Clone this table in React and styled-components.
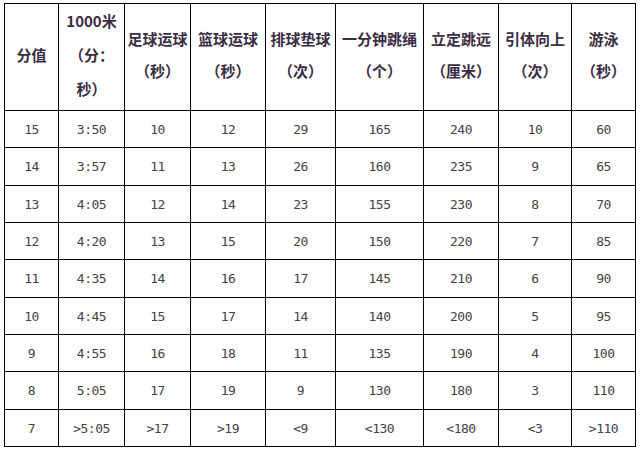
import React from "react";
import styled, { createGlobalStyle } from "styled-components";

const GlobalStyle = createGlobalStyle`
  html, body {
    margin: 0;
    padding: 0;
    background: #ffffff;
  }
  body {
    padding: 3px 0 0 4px;
  }
`;

const COLS = [54, 66, 66, 75, 70, 88, 75, 73, 64];

const HEAD = [
  ["分值"],
  ["1000米", "（分：", "秒）"],
  ["足球运球", "（秒）"],
  ["篮球运球", "（秒）"],
  ["排球垫球", "（次）"],
  ["一分钟跳绳", "（个）"],
  ["立定跳远", "（厘米）"],
  ["引体向上", "（次）"],
  ["游泳", "（秒）"],
];

const ROWS = [
  ["15", "3:50", "10", "12", "29", "165", "240", "10", "60"],
  ["14", "3:57", "11", "13", "26", "160", "235", "9", "65"],
  ["13", "4:05", "12", "14", "23", "155", "230", "8", "70"],
  ["12", "4:20", "13", "15", "20", "150", "220", "7", "85"],
  ["11", "4:35", "14", "16", "17", "145", "210", "6", "90"],
  ["10", "4:45", "15", "17", "14", "140", "200", "5", "95"],
  ["9", "4:55", "16", "18", "11", "135", "190", "4", "100"],
  ["8", "5:05", "17", "19", "9", "130", "180", "3", "110"],
  ["7", ">5:05", ">17", ">19", "<9", "<130", "<180", "<3", ">110"],
];

const Table = styled.table`
  border-collapse: collapse;
  table-layout: fixed;
  width: 632px;
  border: 1px solid #000;
`;

const HeadRow = styled.tr`
  height: 106px;
`;

const HeadCell = styled.th`
  border: 1px solid #000;
  padding: 0 2px 4px;
  text-align: center;
  vertical-align: middle;
  font-family: "Noto Sans CJK SC", "DejaVu Sans", sans-serif;
  font-size: 15px;
  font-weight: 700;
  line-height: ${(p) => (p.tall ? "34px" : "32px")};
  color: #3a2d44;
  white-space: nowrap;
`;

const Row = styled.tr`
  height: ${(p) => (p.extra ? "38px" : "37px")};
`;

const Cell = styled.td`
  border: 1px solid #000;
  padding: 0;
  text-align: center;
  vertical-align: middle;
  font-family: "DejaVu Sans Mono", "Liberation Mono", monospace;
  font-size: 13px;
  color: #444;
  letter-spacing: -0.5px;
`;

export default function App() {
  return (
    <>
      <GlobalStyle />
      <Table>
        <colgroup>
          {COLS.map((w, i) => (
            <col key={i} style={{ width: w }} />
          ))}
        </colgroup>
        <thead>
          <HeadRow>
            {HEAD.map((lines, i) => (
              <HeadCell key={i} tall={lines.length > 2}>
                {lines.map((l, j) => (
                  <div key={j}>{l}</div>
                ))}
              </HeadCell>
            ))}
          </HeadRow>
        </thead>
        <tbody>
          {ROWS.map((row, r) => (
            <Row key={r} extra={r % 3 === 1}>
              {row.map((v, c) => (
                <Cell key={c}>{v}</Cell>
              ))}
            </Row>
          ))}
        </tbody>
      </Table>
    </>
  );
}
